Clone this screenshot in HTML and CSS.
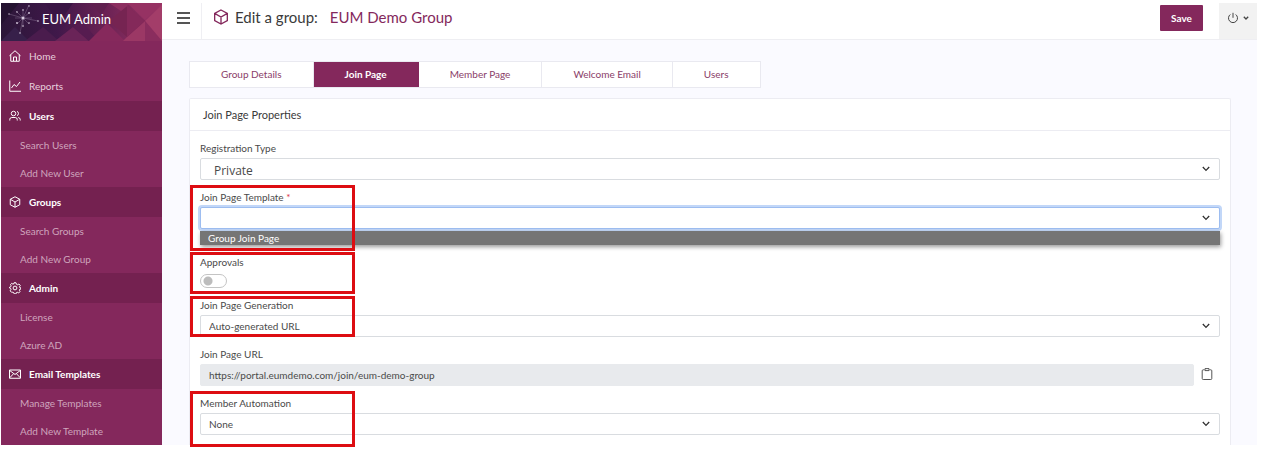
FILE: index.html
```html
<!DOCTYPE html>
<html lang="en">
<head>
    <meta charset="UTF-8">
    <meta name="viewport" content="width=device-width, initial-scale=1.0">
    <title>EUM Admin - Edit a group</title>
    <link rel="stylesheet" href="styles.css">
</head>
<body>
    <div class="app">
        <aside class="sidebar">
            <div class="brand">
                <svg class="brand-bg" viewBox="0 0 161 38" preserveAspectRatio="none" aria-hidden="true">
                    <defs>
                        <linearGradient id="brandFill" x1="0" x2="1" y1="0" y2="0">
                            <stop offset="0" stop-color="#2b1638"/>
                            <stop offset="0.35" stop-color="#40184a"/>
                            <stop offset="0.65" stop-color="#6b2254"/>
                            <stop offset="1" stop-color="#9c3566"/>
                        </linearGradient>
                    </defs>
                    <rect width="161" height="38" fill="url(#brandFill)"/>
                    <polygon points="0,0 18,0 0,22" fill="#241230"/>
                    <polygon points="0,38 14,24 28,38" fill="#37204a"/>
                    <polygon points="24,38 42,24 58,38" fill="#4a1c4d"/>
                    <polygon points="44,0 72,0 58,20" fill="#3a1544"/>
                    <polygon points="54,38 72,24 88,38" fill="#6a2458"/>
                    <polygon points="72,24 80,18 98,38 88,38" fill="#561c50"/>
                    <polygon points="90,0 108,0 100,12" fill="#60204f"/>
                    <polygon points="88,38 106,20 124,38" fill="#86295c"/>
                    <polygon points="108,18 126,3 144,18 126,34" fill="#762452"/>
                    <polygon points="108,0 130,0 120,8" fill="#8c2f60"/>
                    <polygon points="126,34 144,18 144,38 122,38" fill="#9b3865"/>
                    <polygon points="126,2 126,34 144,18" fill="#84295a"/>
                    <polygon points="144,18 161,2 161,38" fill="#a33d69"/>
                    <polygon points="126,0 161,0 144,17" fill="#963263"/>
                    <polygon points="144,18 161,38 144,38" fill="#8a2d5e"/>
                    <g stroke="#b9a6c4" stroke-width="0.5" opacity="0.6">
                        <path d="M22 15L8 11M22 15L37 18M22 15L19 30M22 15L28 2M22 15L15 8M22 15L29 9M22 15L16 21M22 15L28 21M22 15V6M22 15V24M22 15H14M22 15H31"/>
                    </g>
                    <g fill="#d9cce0">
                        <circle cx="22" cy="15" r="1.500"/>
                        <circle cx="8" cy="11" r="0.700"/><circle cx="37" cy="18" r="0.800"/>
                        <circle cx="19" cy="30" r="0.800"/><circle cx="28" cy="3" r="0.700"/>
                        <circle cx="16" cy="9" r="0.800"/><circle cx="28" cy="10" r="0.900"/>
                        <circle cx="16" cy="20" r="0.900"/><circle cx="28" cy="20" r="0.800"/>
                        <circle cx="22" cy="7" r="0.800"/><circle cx="22" cy="23" r="0.800"/>
                    </g>
                </svg>
                <span class="brand-name">EUM Admin</span>
            </div>
            <nav class="menu">
                <a href="#" class="menu-item">
                    <svg class="icon" viewBox="0 0 24 24"><path d="M1 11.500L12 1.500l11 10M3.500 9.500v13h17v-13M9 22v-8h6v8"/></svg>
                    Home
                </a>
                <a href="#" class="menu-item">
                    <svg class="icon" viewBox="0 0 24 24"><path d="M1.500 1v21.500H24M5 16l5-7 5 4 7-9"/></svg>
                    Reports
                </a>
                <a href="#" class="menu-item heading">
                    <svg class="icon" viewBox="0 0 24 24"><circle cx="9" cy="7" r="4.500"/><path d="M1.500 21v-2a4 4 0 0 1 4-4h7a4 4 0 0 1 4 4v2M16 2.800a4.500 4.500 0 0 1 0 8.500M18.500 15a4.500 4.500 0 0 1 4 4v2"/></svg>
                    Users
                </a>
                <a href="#" class="menu-sub">Search Users</a>
                <a href="#" class="menu-sub">Add New User</a>
                <a href="#" class="menu-item heading">
                    <svg class="icon" viewBox="0 0 24 24"><path d="M12 1.500l9.500 5v11L12 22.500l-9.500-5v-11zM2.500 6.500L12 12l9.500-5.500M12 12v10.500"/></svg>
                    Groups
                </a>
                <a href="#" class="menu-sub">Search Groups</a>
                <a href="#" class="menu-sub">Add New Group</a>
                <a href="#" class="menu-item heading">
                    <svg class="icon" viewBox="0 0 24 24"><circle cx="12" cy="12" r="3.800"/><path d="M10 1.500h4l.8 3 2.300 1 2.700-1.500 2.700 2.800-1.500 2.700.8 2 2.200.5v2l-2.500.5-.8 2 1.300 2.700-2.800 2.800-2.700-1.500-2 1-.8 2.500h-3l-1-2.500-2.200-1L5 20.500l-2.700-2.800L4 14.800l-.8-2L1 12V10.500L3.500 9.500 4.200 7.500 3 5l2.500-2.300L8 4.500l1.300-.5z"/></svg>
                    Admin
                </a>
                <a href="#" class="menu-sub">License</a>
                <a href="#" class="menu-sub">Azure AD</a>
                <a href="#" class="menu-item heading">
                    <svg class="icon" viewBox="0 0 24 24"><path d="M1 4h22v16.500H1zM1.500 5l10.500 8L22.500 5M1.500 19.500l7.500-8M22.500 19.500l-7.500-8"/></svg>
                    Email Templates
                </a>
                <a href="#" class="menu-sub">Manage Templates</a>
                <a href="#" class="menu-sub">Add New Template</a>
            </nav>
        </aside>

        <div class="main">
            <header class="topbar">
                <button type="button" class="menu-toggle" aria-label="Toggle menu">
                    <svg viewBox="0 0 13 12"><path d="M0 1h13M0 6h13M0 11h13"/></svg>
                </button>
                <h1 class="page-title">
                    <svg class="title-icon" viewBox="0 0 24 24"><path d="M12 1.500l9.500 5v11L12 22.500l-9.500-5v-11zM2.500 6.500L12 12l9.500-5.500M12 12v10.500"/></svg>
                    Edit a group: <span class="group-name">EUM Demo Group</span>
                </h1>
                <button type="button" class="save-btn">Save</button>
                <button type="button" class="power-btn" aria-label="Account">
                    <svg class="power-icon" viewBox="0 0 12 12"><path d="M6 .8v5M3.300 2.500a4.500 4.500 0 1 0 5.400 0"/></svg>
                    <svg class="caret-icon" viewBox="0 0 6 4"><path d="M.8.8L3 3 5.200.8"/></svg>
                </button>
            </header>

            <div class="content">
                <nav class="tabs">
                    <a href="#" class="tab">Group Details</a>
                    <a href="#" class="tab active">Join Page</a>
                    <a href="#" class="tab">Member Page</a>
                    <a href="#" class="tab">Welcome Email</a>
                    <a href="#" class="tab">Users</a>
                </nav>

                <section class="card">
                    <h2 class="card-header">Join Page Properties</h2>
                    <form class="card-body">
                        <div class="form-group">
                            <label for="regType">Registration Type</label>
                            <select id="regType" class="control large">
                                <option>Private</option>
                            </select>
                        </div>
                        <div class="form-group">
                            <label for="template">Join Page Template <span class="required">*</span></label>
                            <select id="template" class="control focused">
                                <option></option>
                            </select>
                            <ul class="options">
                                <li>Group Join Page</li>
                            </ul>
                            <span class="marker marker-template"></span>
                        </div>
                        <div class="form-group">
                            <label for="approvals">Approvals</label>
                            <input type="checkbox" id="approvals" class="switch">
                            <span class="marker marker-approvals"></span>
                        </div>
                        <div class="form-group">
                            <label for="generation">Join Page Generation</label>
                            <select id="generation" class="control">
                                <option>Auto-generated URL</option>
                            </select>
                            <span class="marker marker-generation"></span>
                        </div>
                        <div class="form-group">
                            <label for="joinUrl">Join Page URL</label>
                            <div class="url-row">
                                <input type="text" id="joinUrl" class="control" value="https://portal.eumdemo.com/join/eum-demo-group" readonly>
                                <button type="button" class="copy-btn" aria-label="Copy URL">
                                    <svg viewBox="0 0 12 12"><path d="M3.500 1.800H2.200a1 1 0 0 0-1 1v7.700a1 1 0 0 0 1 1h7.600a1 1 0 0 0 1-1V2.800a1 1 0 0 0-1-1H8.500M4 .6h4v2H4z"/></svg>
                                </button>
                            </div>
                        </div>
                        <div class="form-group">
                            <label for="automation">Member Automation</label>
                            <select id="automation" class="control">
                                <option>None</option>
                            </select>
                            <span class="marker marker-automation"></span>
                        </div>
                    </form>
                </section>
            </div>
        </div>
    </div>
</body>
</html>
```
FILE: styles.css
```css
* {
    box-sizing: border-box;
}

body {
    margin: 0;
    padding: 3px 6px 12px 1px;
    background: #fff;
    font-family: Lato, sans-serif;
    font-size: 10px;
    color: #4a4a4a;
}

a {
    text-decoration: none;
}

button,
input,
select {
    font-family: inherit;
    font-size: inherit;
    margin: 0;
}

button {
    cursor: pointer;
    padding: 0;
    border: none;
}

svg {
    fill: none;
    stroke: currentColor;
    display: block;
    flex: none;
}

.app {
    display: flex;
}

/* sidebar */
.sidebar {
    flex: 0 0 161px;
    background: #84285c;
}

.brand {
    position: relative;
    height: 38px;
    padding-left: 41px;
    display: flex;
    align-items: center;
    padding-bottom: 7px;
}

.brand-bg {
    position: absolute;
    top: 0;
    left: 0;
    width: 100%;
    height: 100%;
    stroke: none;
}

.brand-name {
    position: relative;
    color: #fff;
    font-size: 13px;
}

.menu {
    display: flex;
    flex-direction: column;
}

.menu-item {
    display: flex;
    align-items: center;
    height: 30px;
    padding-left: 8px;
    gap: 8px;
    color: #e6cfdc;
}

.menu-item.heading {
    background: #742150;
    color: #fff;
    font-weight: bold;
}

.menu-sub {
    height: 28px;
    line-height: 28px;
    padding-left: 19px;
    color: #cfa5bd;
}

.icon {
    width: 12px;
    height: 12px;
    stroke-width: 2;
    color: #fff;
}

/* top bar */
.main {
    flex: 1;
    min-width: 0;
    background: #fafaff;
}

.topbar {
    display: flex;
    height: 37px;
    background: #fff;
    border-bottom: 1px solid #eeeef2;
}

.menu-toggle {
    width: 40px;
    padding: 0 12px 6px 15px;
    background: none;
    border-right: 1px solid #efeff3;
    color: #555;
}

.menu-toggle svg {
    width: 13px;
    height: 12px;
    stroke-width: 2;
}

.page-title {
    flex: 1;
    display: flex;
    align-items: center;
    margin: 0;
    padding: 0 0 8px 11px;
    font-size: 15px;
    font-weight: normal;
    color: #3a3a3a;
}

.title-icon {
    width: 16px;
    height: 16px;
    margin-right: 6px;
    stroke-width: 2;
    color: #84285c;
}

.group-name {
    margin-left: 12px;
    color: #84285c;
}

.save-btn {
    width: 43px;
    height: 26px;
    margin: 2px 16px 0 0;
    background: #84285c;
    color: #fff;
    border-radius: 1px;
    font-weight: bold;
}

.power-btn {
    display: flex;
    align-items: center;
    justify-content: center;
    gap: 4px;
    width: 38px;
    padding-bottom: 6px;
    background: #f2f2f2;
    color: #444;
}

.power-icon {
    width: 12px;
    height: 12px;
}

.caret-icon {
    width: 6px;
    height: 4px;
    stroke-width: 1.3;
}

/* content */
.content {
    padding: 21px 26px 0 27px;
}

.tabs {
    display: flex;
    width: fit-content;
    border: 1px solid #e9e9f0;
    background: #fff;
}

.tab {
    height: 25px;
    line-height: 25px;
    padding: 0 31px;
    color: #8a3d68;
    border-right: 1px solid #e9e9f0;
}

.tab:last-child {
    border-right: none;
}

.tab.active {
    background: #84285c;
    border-color: #84285c;
    color: #fff;
    font-weight: bold;
}

.card {
    margin-top: 10px;
    background: #fff;
    border: 1px solid #ececf2;
    border-bottom: none;
    border-radius: 2px 2px 0 0;
}

.card-header {
    margin: 0;
    padding: 0 13px;
    line-height: 31px;
    font-size: 11px;
    font-weight: normal;
    color: #3a3a3a;
    border-bottom: 1px solid #ececf2;
}

.card-body {
    padding: 9px 10px 1px;
}

.form-group {
    position: relative;
    margin-bottom: 9px;
}

label {
    display: block;
    line-height: 16px;
    margin-bottom: 2px;
}

.required {
    color: #d9343f;
}

.control {
    display: block;
    width: 100%;
    height: 22px;
    padding: 0 8px;
    border: 1px solid #d9dce0;
    border-radius: 2px;
    background: #fff;
    color: #4a4a4a;
    appearance: none;
    outline: none;
}

select.control {
    background: #fff url("data:image/svg+xml,%3Csvg xmlns='http://www.w3.org/2000/svg' viewBox='0 0 8 6'%3E%3Cpath fill='none' stroke='%23333' stroke-width='1.3' d='M.8 1L4 4.400 7.200 1'/%3E%3C/svg%3E") no-repeat right 9px center / 8px 6px;
}

.control.large {
    padding: 2px 13px 0;
    font-family: "Open Sans", sans-serif;
    font-size: 12px;
}

.control.focused {
    border-color: #9dbdf0;
    box-shadow: 0 0 0 2px #c2d7f8;
}

.control[readonly] {
    background: #e8eaed;
    border-color: #e8eaed;
}

.options {
    list-style: none;
    margin: 2px 0 0;
    padding: 0;
    position: relative;
    box-shadow: 1px 2px 4px rgba(0,0,0,0.4);
}

.options li {
    height: 14px;
    line-height: 14px;
    padding: 0 8px;
    background: #757575;
    color: #fff;
}

.switch {
    display: block;
    appearance: none;
    width: 27px;
    height: 14px;
    margin: 4px 0 0;
    border: 1px solid #c4c4c4;
    border-radius: 7px;
    background: #fff radial-gradient(circle at 7px 6px, #bcbcbc 4px, transparent 5px);
}

.url-row {
    display: flex;
}

.url-row .control {
    flex: 1;
}

.copy-btn {
    display: flex;
    align-items: center;
    justify-content: center;
    width: 26px;
    padding-bottom: 2px;
    background: none;
    color: #555;
}

.copy-btn svg {
    width: 12px;
    height: 12px;
}

/* red frames over the fields to fill in */
.marker {
    position: absolute;
    left: -10px;
    width: 165px;
    border: 3px solid #dd0d12;
    pointer-events: none;
}

.marker-template {
    top: -4px;
    height: 66px;
}

.marker-approvals {
    top: -2px;
    height: 42px;
}

.marker-generation {
    top: -1px;
    height: 41px;
}

.marker-automation {
    top: -4px;
    height: 56px;
}
```
